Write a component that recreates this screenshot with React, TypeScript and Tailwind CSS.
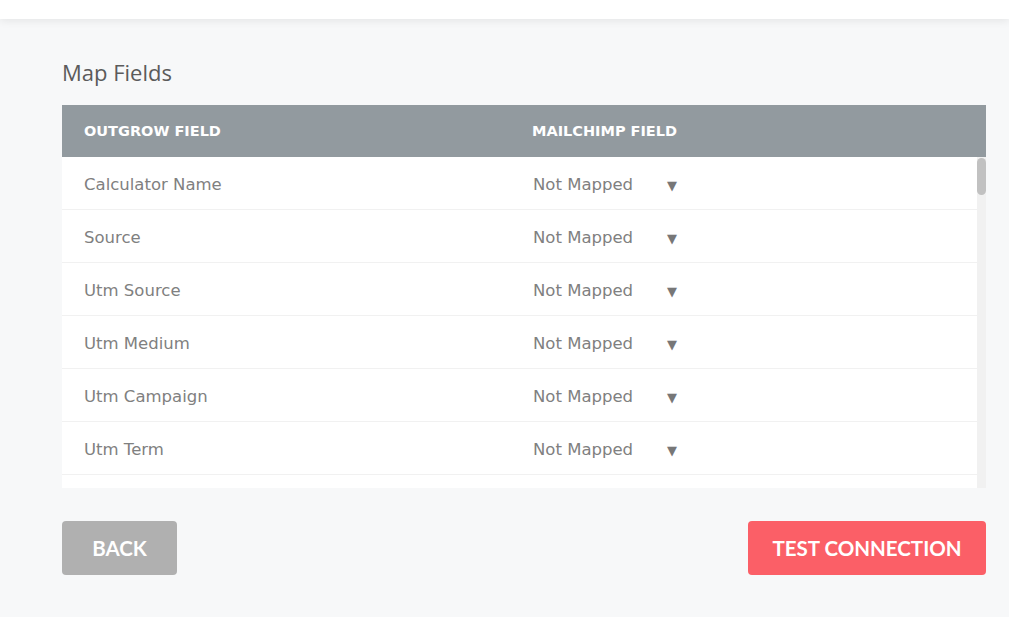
import React from 'react';

const fields = [
    'Calculator Name',
    'Source',
    'Utm Source',
    'Utm Medium',
    'Utm Campaign',
    'Utm Term',
    'Utm Content',
];

const FieldRow: React.FC<{ name: string }> = ({ name }) => (
    <div className="flex h-[53px] shrink-0 items-center border-b border-[#f1f1f1] bg-white pt-[5px]">
        <div className="w-[448px] pl-[22px] text-[16.5px] text-[#808080]">{name}</div>
        <div className="flex items-center pl-[23px] text-[16.5px] text-[#808080]">
            <span className="w-[134px]">Not Mapped</span>
            <span className="text-[13px] text-[#777]">▼</span>
        </div>
    </div>
);

export default function App() {
    return (
        <div className="min-h-[617px] bg-[#f7f8f9] font-['DejaVu_Sans',sans-serif]">
            <div className="h-[19px] bg-white shadow-[0_2px_8px_rgba(0,0,0,0.08)]" />
            <div className="px-[62px] pr-[23px]">
                <h2 className="mt-[39px] font-['Open_Sans',sans-serif] text-[22px] leading-[28px] text-[#5b5b5b]">
                    Map Fields
                </h2>
                <div className="mt-[19px]">
                    <div className="flex h-[52px] items-center bg-[#929a9f] pt-[2px] text-[14.5px] font-bold text-white">
                        <div className="w-[448px] pl-[22px]">OUTGROW FIELD</div>
                        <div className="pl-[22px]">MAILCHIMP FIELD</div>
                    </div>
                    <div className="flex h-[331px] bg-white">
                        <div className="flex flex-1 flex-col overflow-hidden">
                            {fields.map((f) => (
                                <FieldRow key={f} name={f} />
                            ))}
                        </div>
                        <div className="w-[9px] bg-[#f1f1f1] pt-[1px]">
                            <div className="h-[37px] rounded-[5px] bg-[#c1c1c1]" />
                        </div>
                    </div>
                </div>
                <div className="mt-[33px] flex items-center justify-between font-['Lato',sans-serif]">
                    <button className="h-[54px] w-[115px] rounded-[4px] bg-[#b0b0b0] text-[20.5px] font-bold text-white">
                        BACK
                    </button>
                    <button className="h-[54px] w-[238px] rounded-[4px] bg-[#fb5f67] text-[20.5px] font-bold text-white">
                        TEST CONNECTION
                    </button>
                </div>
            </div>
        </div>
    );
}
